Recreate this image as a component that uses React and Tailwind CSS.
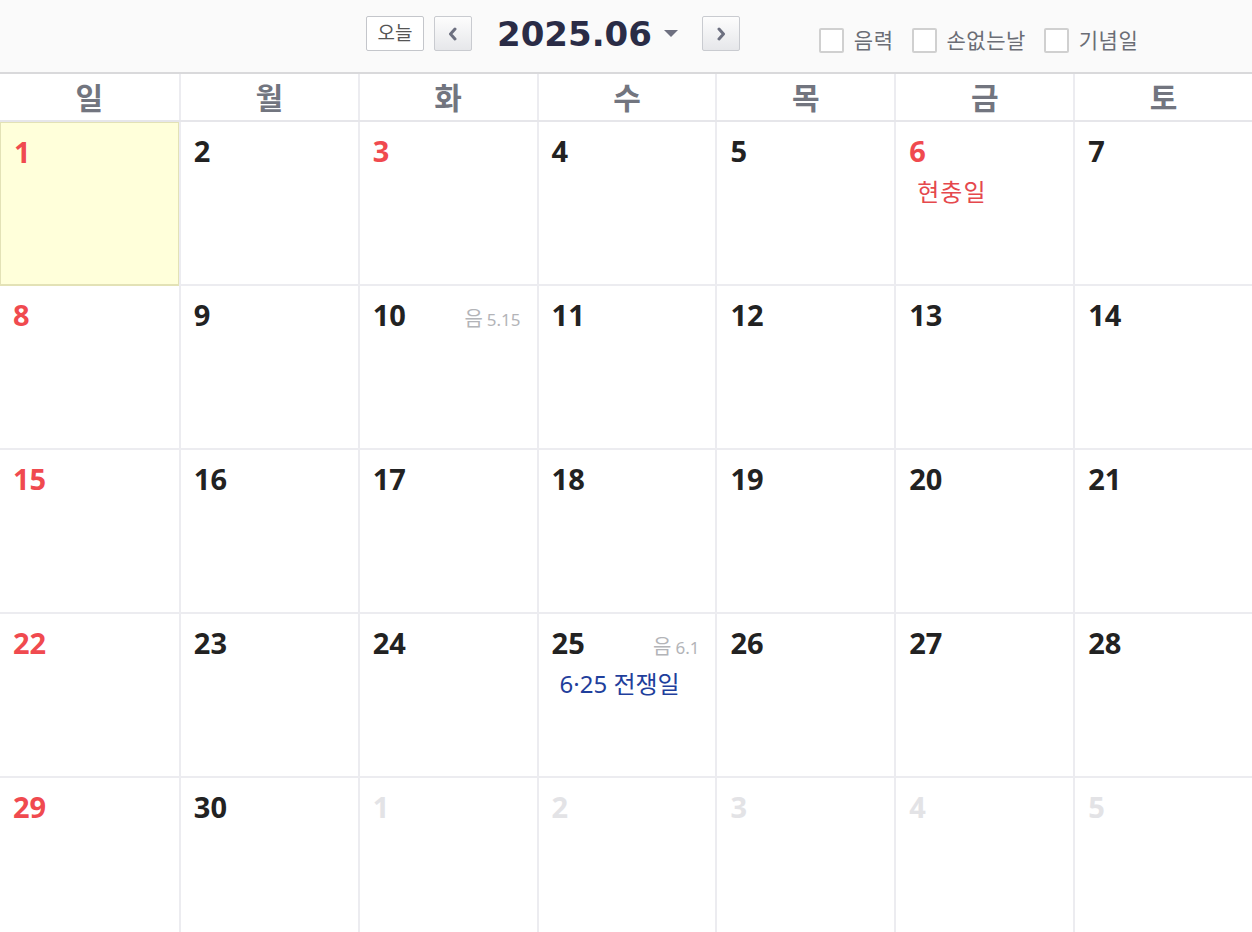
import React from "react";

const FONT = { fontFamily: '"Noto Sans", "Noto Sans CJK KR", sans-serif' };

const days = ["일", "월", "화", "수", "목", "금", "토"];

function buildCells() {
  const cells = [];
  for (let d = 1; d <= 30; d++) cells.push({ d, cur: true });
  for (let d = 1; d <= 5; d++) cells.push({ d, cur: false });
  return cells;
}

const redDays = new Set([1, 3, 6, 8, 15, 22, 29]);
const lunar = { 10: "5.15", 25: "6.1" };
const events = {
  6: { text: "현충일", cls: "text-[#e5484d] tracking-[1px]" },
  25: { text: "6·25 전쟁일", cls: "text-[#1f3f9c] tracking-[0px]" },
};

function Checkbox({ label }) {
  return (
    <label className="flex items-center gap-[10px]">
      <span className="block w-[25px] h-[25px] border-2 border-[#d0d0d0] bg-white rounded-[2px]" />
      <span className="text-[21px] tracking-[0.5px] text-[#6a6d75] leading-none">{label}</span>
    </label>
  );
}

function NavBtn({ dir }) {
  return (
    <button className="w-[38px] h-[35px] flex items-center justify-center border border-[#c9cbd0] rounded-[2px] bg-gradient-to-b from-[#fdfdfd] to-[#e6e7ea]">
      <svg width="12" height="14" viewBox="0 0 12 14">
        {dir === "left" ? (
          <path d="M8 2 L3.5 7 L8 12" stroke="#6d7080" strokeWidth="3" fill="none" strokeLinecap="round" strokeLinejoin="round" />
        ) : (
          <path d="M4 2 L8.5 7 L4 12" stroke="#6d7080" strokeWidth="3" fill="none" strokeLinecap="round" strokeLinejoin="round" />
        )}
      </svg>
    </button>
  );
}

export default function App() {
  const cells = buildCells();
  return (
    <div className="w-[1252px] h-[932px] overflow-hidden bg-white" style={FONT}>
      {/* top bar */}
      <div className="h-[74px] bg-[#fafafa] border-b-2 border-[#d9d9db] flex items-start">
        <div className="flex items-center ml-[366px] pt-[16px]">
          <button className="w-[58px] h-[35px] border border-[#c4c6cb] bg-white rounded-[2px] text-[19px] text-[#555] leading-none">
            오늘
          </button>
          <div className="ml-[10px]">
            <NavBtn dir="left" />
          </div>
          <div
            className="ml-[25px] text-[34px] font-bold text-[#2a2c46] leading-none"
            style={{ fontFamily: '"DejaVu Sans", sans-serif' }}
          >
            2025.06
          </div>
          <svg className="ml-[12px]" width="14" height="8" viewBox="0 0 14 8">
            <path d="M0 0 L14 0 L7 7 Z" fill="#6e7080" />
          </svg>
          <div className="ml-[24px]">
            <NavBtn dir="right" />
          </div>
        </div>
        <div className="flex items-center gap-[18px] ml-[79px] pt-[28px]">
          <Checkbox label="음력" />
          <Checkbox label="손없는날" />
          <Checkbox label="기념일" />
        </div>
      </div>

      {/* weekday header */}
      <div className="grid grid-cols-7 h-[48px] border-b-2 border-[#e6e6ea]">
        {days.map((d, i) => (
          <div
            key={d}
            className={`flex items-center justify-center text-[30px] font-bold text-[#72757f] ${i > 0 ? "border-l-2 border-[#ececf0]" : ""}`}
          >
            {d}
          </div>
        ))}
      </div>

      {/* grid */}
      <div className="grid grid-cols-7 auto-rows-[164px]">
        {cells.map((c, i) => {
          const col = i % 7;
          const selected = c.cur && c.d === 1;
          const color = !c.cur
            ? "text-[#e3e3e6]"
            : redDays.has(c.d)
            ? "text-[#f04a4f]"
            : "text-[#222]";
          const ev = c.cur ? events[c.d] : null;
          return (
            <div
              key={i}
              className={`border-b-2 border-[#ececf0] ${col > 0 ? "border-l-2" : ""} ${
                selected ? "bg-[#ffffda] !border-[#e3e2b6] border" : ""
              }`}
            >
              <div className="flex items-baseline justify-between pl-[13px] pr-[16px] pt-[14px]">
                <span className={`text-[29px] font-bold leading-none ${color}`}>{c.d}</span>
                {c.cur && lunar[c.d] && (
                  <span className="text-[#b3b4b8] leading-none">
                    <span className="text-[20px]">음</span>
                    <span className="text-[17px] ml-[4px]">{lunar[c.d]}</span>
                  </span>
                )}
              </div>
              {ev && (
                <div className={`pl-[21px] mt-[15px] text-[24px] leading-none ${ev.cls}`}>{ev.text}</div>
              )}
            </div>
          );
        })}
      </div>
    </div>
  );
}
